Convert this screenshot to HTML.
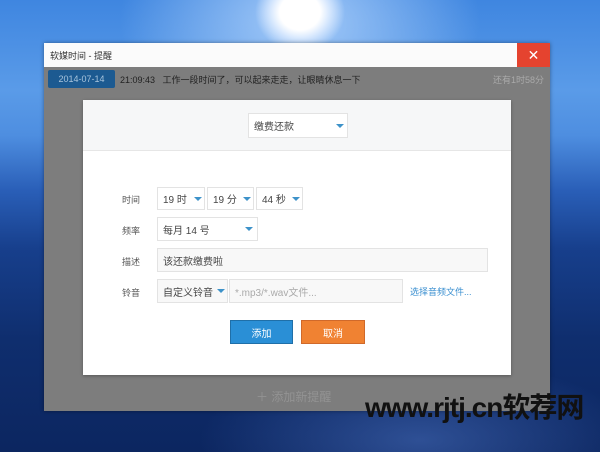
<!DOCTYPE html>
<html><head><meta charset="utf-8"><style>
*{margin:0;padding:0;box-sizing:border-box}
body{width:600px;height:452px;overflow:hidden;position:relative;font-family:"Liberation Sans","Noto Sans CJK SC",sans-serif;font-size:10px;color:#444;
background:
radial-gradient(ellipse 45px 40px at 300px 12px,#fff 0%,#fff 45%,rgba(220,235,255,.8) 70%,rgba(150,200,255,0) 100%),
radial-gradient(ellipse 180px 120px at 300px 20px,rgba(190,220,255,.8),rgba(120,170,240,0)),
radial-gradient(ellipse 220px 80px at 420px 440px,rgba(80,120,200,.5),rgba(0,0,0,0)),
linear-gradient(180deg,#3f86e0 0%,#5a9be8 20%,#4e8ee0 30%,#2a5fb8 42%,#173f8c 55%,#0f2e6e 75%,#0c2660 100%);}
.abs{position:absolute}
.win{left:44px;top:43px;width:506px;height:368px;background:#7d7d7d;box-shadow:0 0 4px rgba(0,0,0,.4)}
.title{left:0;top:0;width:506px;height:24px;background:#fbfbfb;font-size:9px;color:#333;padding:6px 0 0 6px}
.close{right:0;top:0;width:33px;height:24px;background:#e5432f;color:#fff;text-align:center;font-size:14px;line-height:24px}
.chip{left:4px;top:27px;width:67px;height:18px;background:#1c5a91;color:#a8c4dd;font-size:9px;display:flex;align-items:center;justify-content:center;border-radius:2px}
.row{top:27px;height:18px;display:flex;align-items:center;font-size:9px;color:#222}
.dlg{left:39px;top:57px;width:428px;height:275px;background:#fff;box-shadow:0 1px 3px rgba(0,0,0,.3)}
.top{left:0;top:0;width:428px;height:51px;background:#f6f7f8;border-bottom:1px solid #e6e6e6}
.sel{background:#fff;border:1px solid #e3e3e3;font-size:10px;color:#444;padding-left:5px;display:flex;align-items:center}
.arr{position:absolute;width:0;height:0;border-left:4px solid transparent;border-right:4px solid transparent;border-top:4px solid #3d92c9}
.lbl{left:39px;font-size:9px;color:#555}
.btn{color:#fff;font-size:10px;height:24px;display:flex;align-items:center;justify-content:center}
</style></head><body>
<div class="abs win">
 <div class="abs title">软媒时间 - 提醒</div>
 <div class="abs close">✕</div>
 <div class="abs chip">2014-07-14</div>
 <div class="abs row" style="left:76px">21:09:43 &nbsp;&nbsp;工作一段时间了，可以起来走走，让眼睛休息一下</div>
 <div class="abs row" style="right:6px;color:#aaa">还有1时58分</div>
 <div class="abs dlg">
  <div class="abs top">
   <div class="abs sel" style="left:165px;top:13px;width:100px;height:25px">缴费还款<span class="arr" style="left:87px;top:10px"></span></div>
  </div>
  <div class="abs lbl" style="top:93px">时间</div>
  <div class="abs sel" style="left:74px;top:87px;width:48px;height:23px">19 时<span class="arr" style="left:36px;top:9px"></span></div>
  <div class="abs sel" style="left:124px;top:87px;width:47px;height:23px">19 分<span class="arr" style="left:35px;top:9px"></span></div>
  <div class="abs sel" style="left:173px;top:87px;width:47px;height:23px">44 秒<span class="arr" style="left:35px;top:9px"></span></div>
  <div class="abs lbl" style="top:124px">频率</div>
  <div class="abs sel" style="left:74px;top:117px;width:101px;height:24px">每月 14 号<span class="arr" style="left:87px;top:9px"></span></div>
  <div class="abs lbl" style="top:155px">描述</div>
  <div class="abs sel" style="left:74px;top:148px;width:331px;height:24px;background:#f8f8f8">该还款缴费啦</div>
  <div class="abs lbl" style="top:186px">铃音</div>
  <div class="abs sel" style="left:74px;top:179px;width:71px;height:24px;background:#f8f8f8">自定义铃音<span class="arr" style="left:59px;top:9px"></span></div>
  <div class="abs sel" style="left:146px;top:179px;width:174px;height:24px;background:#f8f8f8;color:#aaa">*.mp3/*.wav文件...</div>
  <div class="abs" style="left:327px;top:185px;font-size:9px;color:#3a8fd0">选择音频文件...</div>
  <div class="abs btn" style="left:147px;top:220px;width:63px;background:#2a8fd6;border:1px solid #1f6fa8">添加</div>
  <div class="abs btn" style="left:218px;top:220px;width:64px;background:#f08232;border:1px solid #d0692a">取消</div>
 </div>
 <div class="abs" style="left:212px;top:345px;font-size:12px;color:#939393">＋ 添加新提醒</div>
</div>
<div class="abs" style="left:365px;top:386px;font-size:28px;font-weight:bold;color:#111;letter-spacing:-1px;font-family:'Liberation Sans','Noto Sans CJK SC',sans-serif">www.rjtj.cn软荐网</div>
</body></html>
